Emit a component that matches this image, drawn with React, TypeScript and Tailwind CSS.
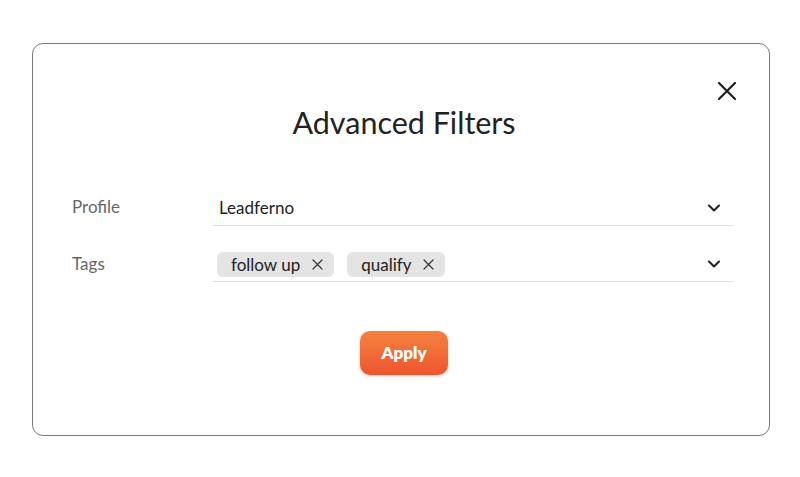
import React from 'react';

const font = { fontFamily: 'Lato, "Noto Sans", sans-serif' };

const Chevron = () => (
  <svg width="14" height="14" viewBox="0 0 14 14" fill="none" className="text-[#1f1f1f]">
    <path d="M2 4.5 7 9.5 12 4.5" stroke="currentColor" strokeWidth="2" strokeLinecap="round" strokeLinejoin="round" />
  </svg>
);

const SmallX = () => (
  <svg width="11" height="11" viewBox="0 0 11 11" fill="none" className="text-[#333]">
    <path d="M1 1 10 10M10 1 1 10" stroke="currentColor" strokeWidth="1.2" strokeLinecap="round" />
  </svg>
);

interface ChipProps {
  label: string;
}

const Chip: React.FC<ChipProps> = ({ label }) => (
  <span className="flex h-[25px] items-center gap-[12px] rounded-[6px] bg-[#e4e4e4] pl-[14px] pr-[11px] text-[17px] text-[#222]">
    {label}
    <SmallX />
  </span>
);

export default function App() {
  return (
    <div className="min-h-[477px] w-[800px] bg-white pt-[43px] pl-[32px]" style={font}>
      <div className="relative flex h-[393px] w-[738px] flex-col items-center rounded-[11px] border-[1.5px] border-[#7a7a7a] pl-[6px] pt-[59px]">
        <button className="absolute right-[32px] top-[37px] text-[#1f1f1f]" aria-label="Close">
          <svg width="20" height="20" viewBox="0 0 20 20" fill="none">
            <path d="M2 2 18 18M18 2 2 18" stroke="currentColor" strokeWidth="2.2" strokeLinecap="round" />
          </svg>
        </button>

        <h2 className="h-[38px] text-[30.5px] leading-[38px] text-[#222]">Advanced Filters</h2>

        <div className="mt-[49px] flex w-full flex-col gap-[20px] pl-[33px] pr-[36px]">
          <div className="flex items-center">
            <span className="w-[141px] pb-[2px] text-[17px] text-[#666]">Profile</span>
            <div className="flex h-[36px] flex-1 items-center justify-between border-b-[1.5px] border-[#dedede] pl-[6px] pr-[12px] text-[17px] text-[#222]">
              <span>Leadferno</span>
              <Chevron />
            </div>
          </div>
          <div className="flex items-center">
            <span className="w-[141px] text-[17px] text-[#666]">Tags</span>
            <div className="flex h-[36px] flex-1 items-center justify-between border-b-[1.5px] border-[#dedede] pl-[4px] pr-[12px]">
              <div className="mt-[2px] flex gap-[13px]">
                <Chip label="follow up" />
                <Chip label="qualify" />
              </div>
              <Chevron />
            </div>
          </div>
        </div>

        <button className="mt-[49px] h-[44px] w-[88px] rounded-[10px] bg-gradient-to-b from-[#f5813e] to-[#ee5430] text-[17px] font-extrabold text-white shadow-[0_1px_3px_rgba(238,84,48,0.35)]">
          Apply
        </button>
      </div>
    </div>
  );
}
